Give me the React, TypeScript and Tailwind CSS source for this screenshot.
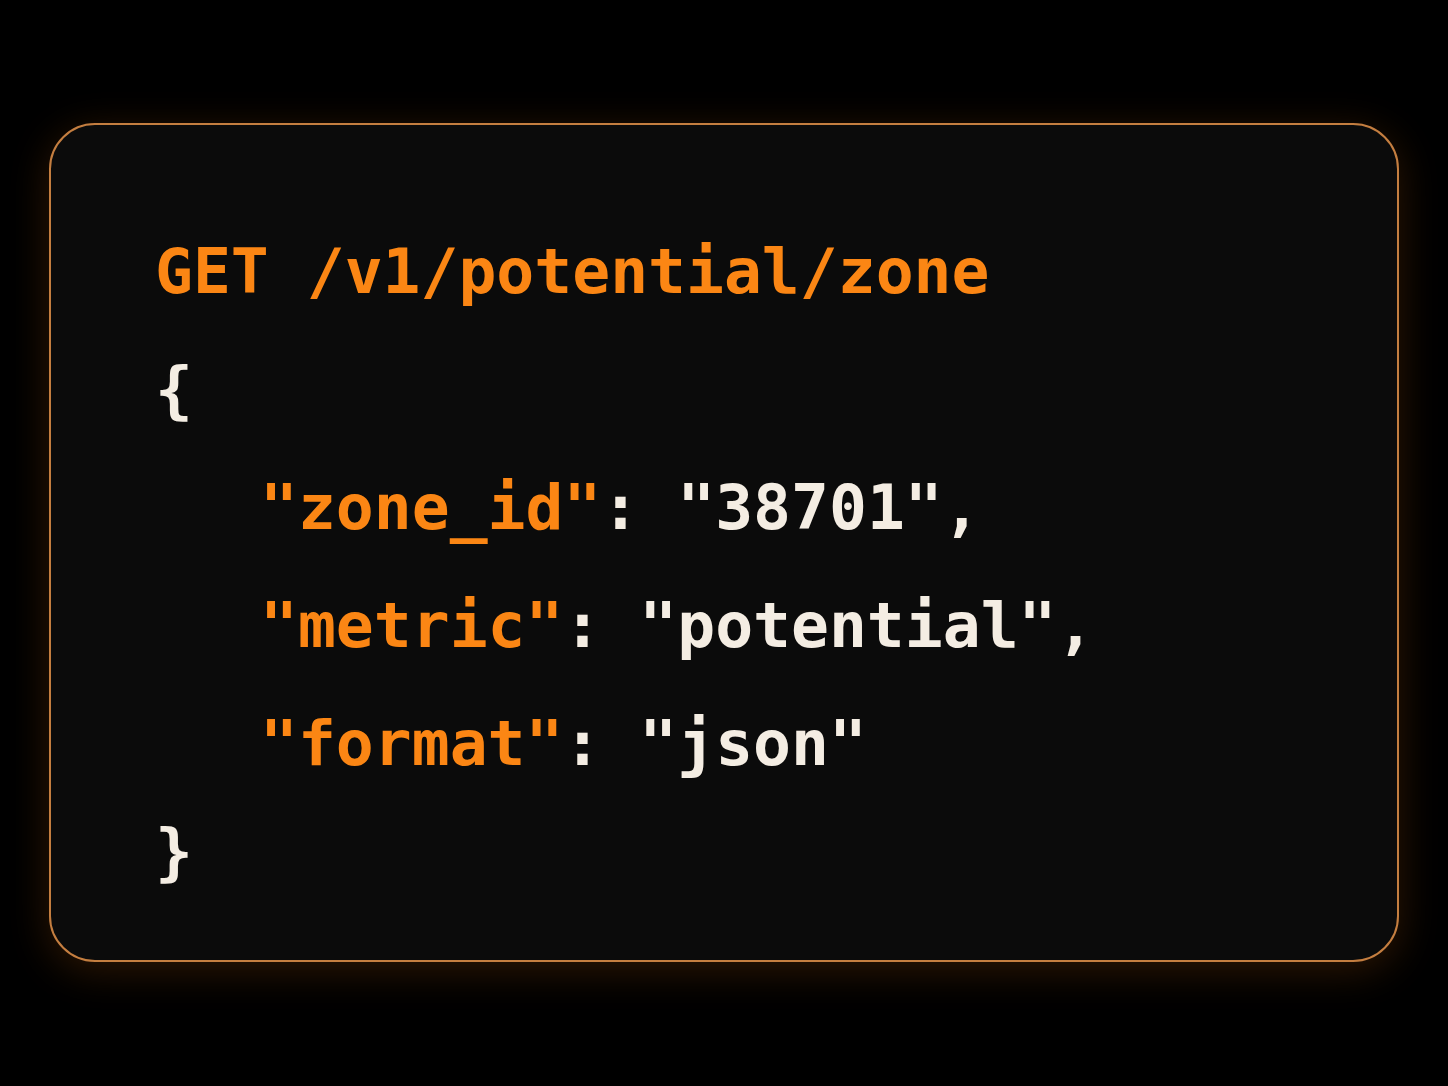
import React from "react"

const O = "text-[#fb8614]"
const W = "text-[#f4ede3]"

const Line = ({ children, indent = false, last = false }: { children: React.ReactNode; indent?: boolean; last?: boolean }) => (
  <div className={`${last ? "h-[98px]" : "h-[118px]"} flex items-center whitespace-pre ${indent ? "pl-[105px]" : ""}`}>{children}</div>
)

export default function App() {
  return (
    <div className="w-[1448px] h-[1086px] bg-black pt-[123px] pl-[49px]">
      <div
        className="w-[1350px] h-[839px] rounded-[46px] border-2 border-[#c47e40] bg-[#0b0b0b] pl-[104px] pt-[87px] shadow-[0_8px_40px_rgba(255,130,20,0.18)]"
        style={{ fontFamily: '"DejaVu Sans Mono", "Liberation Mono", monospace' }}
      >
        <div className="text-[63px] leading-none font-bold">
          <Line><span className={O}>GET /v1/potential/zone</span></Line>
          <Line><span className={W}>{"{"}</span></Line>
          <Line indent>
            <span className={O}>"zone_id"</span>
            <span className={W}>: "38701",</span>
          </Line>
          <Line indent>
            <span className={O}>"metric"</span>
            <span className={W}>: "potential",</span>
          </Line>
          <Line indent>
            <span className={O}>"format"</span>
            <span className={W}>: "json"</span>
          </Line>
          <Line last><span className={W}>{"}"}</span></Line>
        </div>
      </div>
    </div>
  )
}
